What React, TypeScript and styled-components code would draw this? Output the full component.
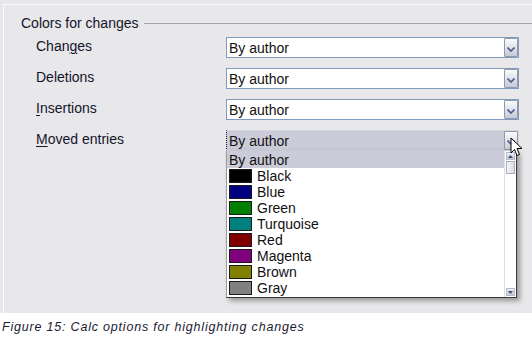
import React from "react";
import styled, { createGlobalStyle } from "styled-components";

const Global = createGlobalStyle`
  html, body { margin: 0; padding: 0; background: #ffffff; }
  body { font-family: "Liberation Sans", Arial, sans-serif; }
`;

const Page = styled.div`
  width: 532px;
  height: 340px;
  position: relative;
  overflow: hidden;
  background: #ffffff;
`;

const Panel = styled.div`
  height: 313px;
  box-sizing: border-box;
  background: #e8e8ea;
  padding: 4px 0 0 3px;
`;

const Frame = styled.div`
  height: 100%;
  box-sizing: border-box;
  border-top: 1px solid #fbfbfc;
  border-left: 1px solid #fbfbfc;
  padding: 10px 0 0 17px;
`;

const Legend = styled.div`
  display: flex;
  align-items: center;
  gap: 5px;
  height: 16px;
  font-size: 14px;
  color: #14142a;
`;

const LegendLine = styled.div`
  flex: 1;
  height: 1px;
  background: #a3a3a8;
  margin-top: 1px;
`;

const Rows = styled.div`
  display: grid;
  grid-template-columns: 190px 293px;
  grid-auto-rows: 21px;
  row-gap: 10px;
  margin-top: 6px;
  padding-left: 15px;
`;

const Label = styled.div`
  font-size: 14px;
  color: #14142a;
  display: flex;
  align-items: center;
  margin-top: -3px;
  u { text-decoration: underline; text-underline-offset: 2px; }
`;

const Combo = styled.div<{ $active?: boolean }>`
  position: relative;
  box-sizing: border-box;
  display: flex;
  align-items: center;
  border: 1px solid ${(p) => (p.$active ? "#d4d6de" : "#7f9cc0")};
  background: ${(p) => (p.$active ? "#cbcbd9" : "#ffffff")};
  padding-left: 2px;
  font-size: 14px;
  color: #111;
  ${(p) => (p.$active ? "border-left: 1px dotted #222;" : "")}
`;

const ComboText = styled.span`
  flex: 1;
`;

const ComboButton = styled.div`
  width: 14px;
  height: 19px;
  box-sizing: border-box;
  border: 1px solid #9098aa;
  border-radius: 1px;
  background: linear-gradient(#fafbfd, #c6cad8);
  display: flex;
  align-items: flex-end;
  justify-content: center;
  padding-bottom: 4px;
  margin-right: 0px;
`;

const DropList = styled.div`
  position: absolute;
  left: 226px;
  top: 150px;
  width: 291px;
  height: 148px;
  box-sizing: border-box;
  background: #ffffff;
  border: 1px solid #3a3a3a;
  border-left-color: #9a9aa2;
  border-top-color: #c9c9d2;
  box-shadow: 3px 3px 5px rgba(0, 0, 0, 0.35);
  display: flex;
`;

const Items = styled.div`
  flex: 1;
  display: flex;
  flex-direction: column;
`;

const Item = styled.div<{ $selected?: boolean }>`
  height: 16px;
  display: flex;
  align-items: center;
  gap: 5px;
  padding-left: 2px;
  font-size: 14px;
  color: #111;
  background: ${(p) => (p.$selected ? "#cbcbd9" : "transparent")};
`;

const FirstItem = styled(Item)`
  height: 17px;
`;

const Swatch = styled.span<{ $c: string }>`
  width: 23px;
  height: 14px;
  box-sizing: border-box;
  border: 1px solid #1a1a1a;
  background: ${(p) => p.$c};
`;

const ScrollBar = styled.div`
  width: 10px;
  margin-right: 1px;
  border-left: 1px solid #dcdce2;
  display: flex;
  flex-direction: column;
  align-items: center;
  padding-top: 1px;
  padding-bottom: 1px;
  gap: 1px;
`;

const ScrollBtn = styled.div`
  width: 9px;
  height: 8px;
  box-sizing: border-box;
  background: linear-gradient(#eef0f5, #c3c8d6);
  border: 1px solid #b7bccb;
  display: flex;
  align-items: center;
  justify-content: center;
`;

const Thumb = styled.div`
  width: 9px;
  height: 13px;
  box-sizing: border-box;
  border: 1px solid #a8adbb;
  background: linear-gradient(90deg, #f4f5f8, #d9dce4);
`;

const Spacer = styled.div`
  flex: 1;
`;

const Cursor = styled.svg`
  position: absolute;
  left: 510px;
  top: 137px;
`;

const Caption = styled.div`
  height: 27px;
  display: flex;
  align-items: center;
  padding-left: 2px;
  font-style: italic;
  font-size: 12.5px;
  letter-spacing: 0.8px;
  color: #1b1b30;
`;

const Chevron = () => (
  <svg width="8" height="5" viewBox="0 0 8 5">
    <path d="M0.5 0.5 L4 4 L7.5 0.5" fill="none" stroke="#4a5a86" strokeWidth="1.6" />
  </svg>
);

const Arrow = ({ up }: { up?: boolean }) => (
  <svg width="5" height="3" viewBox="0 0 5 3">
    <path d={up ? "M0 3 L2.5 0 L5 3Z" : "M0 0 L2.5 3 L5 0Z"} fill="#3c4a74" />
  </svg>
);

const rows: { label: React.ReactNode; active?: boolean }[] = [
  { label: <>Chan<u>g</u>es</> },
  { label: <>Deletions</> },
  { label: <><u>I</u>nsertions</> },
  { label: <><u>M</u>oved entries</>, active: true },
];

const colors: [string, string][] = [
  ["Black", "#000000"],
  ["Blue", "#000080"],
  ["Green", "#008000"],
  ["Turquoise", "#008080"],
  ["Red", "#800000"],
  ["Magenta", "#800080"],
  ["Brown", "#808000"],
  ["Gray", "#808080"],
];

export default function App() {
  return (
    <Page>
      <Global />
      <Panel>
        <Frame>
          <Legend>
            <span>Colors for changes</span>
            <LegendLine />
          </Legend>
          <Rows>
            {rows.map((r, i) => (
              <React.Fragment key={i}>
                <Label>{r.label}</Label>
                <Combo $active={r.active}>
                  <ComboText>By author</ComboText>
                  <ComboButton>
                    <Chevron />
                  </ComboButton>
                </Combo>
              </React.Fragment>
            ))}
          </Rows>
        </Frame>
      </Panel>
      <Caption>Figure 15: Calc options for highlighting changes</Caption>
      <DropList>
        <Items>
          <FirstItem $selected>By author</FirstItem>
          {colors.map(([n, c]) => (
            <Item key={n}>
              <Swatch $c={c} />
              <span>{n}</span>
            </Item>
          ))}
        </Items>
        <ScrollBar>
          <ScrollBtn>
            <Arrow up />
          </ScrollBtn>
          <Thumb />
          <Spacer />
          <ScrollBtn>
            <Arrow />
          </ScrollBtn>
        </ScrollBar>
      </DropList>
      <Cursor width="13" height="20" viewBox="0 0 13 20">
        <path
          d="M1 1 L1 16 L4.5 12.5 L7 18.5 L9.5 17.5 L7 11.5 L12 11.5 Z"
          fill="#ffffff"
          stroke="#000000"
          strokeWidth="1"
          strokeLinejoin="round"
        />
      </Cursor>
    </Page>
  );
}
